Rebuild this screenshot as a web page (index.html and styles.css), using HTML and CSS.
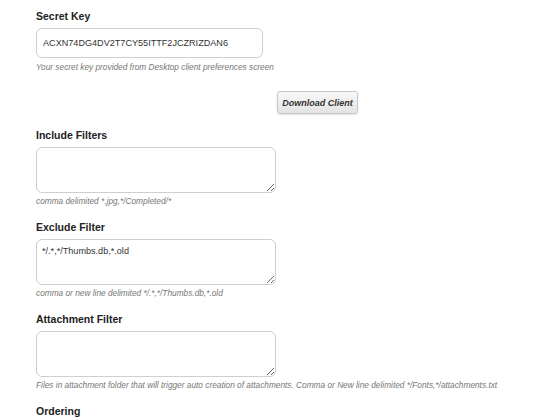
FILE: index.html
```html
<!DOCTYPE html>
<html>
<head>
<meta charset="utf-8">
<link rel="stylesheet" href="styles.css">
</head>
<body>
<form class="form">
  <div class="field">
    <label class="label" for="key">Secret Key</label>
    <input class="input" id="key" type="text" value="ACXN74DG4DV2T7CY55ITTF2JCZRIZDAN6">
    <p class="help">Your secret key provided from Desktop client preferences screen</p>
  </div>
  <div class="actions">
    <button class="btn" type="button">Download Client</button>
  </div>
  <div class="field">
    <label class="label" for="inc">Include Filters</label>
    <textarea class="area" id="inc"></textarea>
    <p class="help">comma delimited *.jpg,*/Completed/*</p>
  </div>
  <div class="field">
    <label class="label" for="exc">Exclude Filter</label>
    <textarea class="area" id="exc">*/.*,*/Thumbs.db,*.old</textarea>
    <p class="help">comma or new line delimited */.*,*/Thumbs.db,*.old</p>
  </div>
  <div class="field">
    <label class="label" for="att">Attachment Filter</label>
    <textarea class="area" id="att"></textarea>
    <p class="help">Files in attachment folder that will trigger auto creation of attachments. Comma or New line delimited */Fonts,*/attachments.txt</p>
  </div>
  <div class="field">
    <label class="label">Ordering</label>
  </div>
</form>
</body>
</html>
```
FILE: styles.css
```css
html, body {
  margin: 0;
  padding: 0;
  background: #fff;
}
body {
  font-family: "Liberation Sans", Arial, sans-serif;
  color: #222;
}
.form {
  padding: 9px 0 0 36px;
  display: flex;
  flex-direction: column;
}
.field {
  display: flex;
  flex-direction: column;
  align-items: flex-start;
  margin-bottom: 14px;
}
.label {
  font-size: 10.5px;
  font-weight: bold;
  line-height: 14px;
  color: #222;
  margin-bottom: 5px;
}
.input {
  box-sizing: border-box;
  width: 227px;
  height: 30px;
  border: 1px solid #cfcfcf;
  border-radius: 6px;
  padding: 0 6px;
  font-family: "Liberation Sans", Arial, sans-serif;
  font-size: 9.1px;
  color: #333;
  margin: 0;
  outline: none;
}
.area {
  box-sizing: border-box;
  width: 240px;
  height: 46px;
  border: 1px solid #cfcfcf;
  border-radius: 6px;
  padding: 6px 5px;
  font-family: "Liberation Sans", Arial, sans-serif;
  font-size: 9.1px;
  line-height: 11px;
  color: #333;
  margin: 0;
  outline: none;
  resize: vertical;
}
.help {
  margin: 3px 0 0;
  font-size: 8.3px;
  line-height: 10px;
  font-style: italic;
  color: #777;
}
.field:first-child .help {
  margin-top: 4px;
}
.field:first-child {
  margin-bottom: 19px;
}
.actions {
  display: flex;
  padding-left: 241px;
  margin-bottom: 14px;
}
.btn {
  box-sizing: border-box;
  width: 81px;
  height: 23px;
  padding: 0;
  border: 1px solid #c8c8c8;
  border-radius: 3px;
  background: linear-gradient(#f9f9f9, #e3e3e3);
  box-shadow: 0 1px 2px rgba(0,0,0,0.12);
  font-family: "Liberation Sans", Arial, sans-serif;
  font-size: 9px;
  font-weight: bold;
  font-style: italic;
  color: #333;
}
```
